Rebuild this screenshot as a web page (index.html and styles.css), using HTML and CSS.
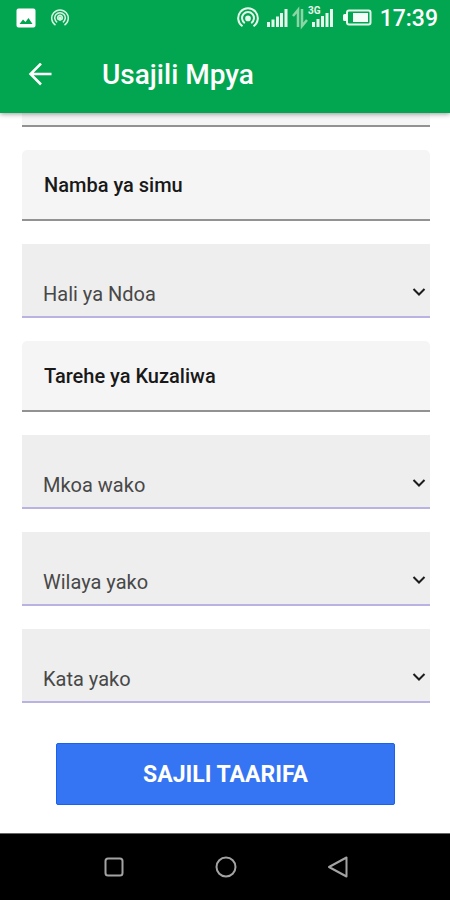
FILE: index.html
```html
<!DOCTYPE html>
<html lang="sw">
<head>
<meta charset="utf-8">
<meta name="viewport" content="width=device-width, initial-scale=1">
<title>Usajili Mpya</title>
<link rel="stylesheet" href="styles.css">
</head>
<body>
<header class="header">
  <div class="status">
    <svg class="icon" width="20" height="20" viewBox="0 0 20 20"><path fill="#fff" fill-rule="evenodd" d="M2.500 0.500h15a2 2 0 0 1 2 2v15a2 2 0 0 1-2 2h-15a2 2 0 0 1-2-2v-15a2 2 0 0 1 2-2zM3.500 16h13l-4-6-3 4-2.500-2.500z"/></svg>
    <svg class="icon" width="18" height="18" viewBox="0 0 24 24" fill="none" stroke="#d9f5e3" stroke-width="2"><path d="M6 21.500a11 11 0 1 1 12 0M8.200 17.800a7 7 0 1 1 7.600 0M10.500 14.500a3.200 3.200 0 1 1 3 0"/><circle cx="12" cy="12" r="1.500" fill="#d9f5e3"/><path d="M12 13v3"/></svg>
    <div class="status-right">
      <svg class="icon" width="22" height="22" viewBox="0 0 24 24" fill="none" stroke="#e4f8eb" stroke-width="2.200"><path d="M6 21a10.700 10.700 0 1 1 12 0M8.500 17.500a6.500 6.500 0 1 1 7 0"/><circle cx="12" cy="12.500" r="2" fill="#e4f8eb"/></svg>
      <svg class="icon" width="68" height="24" viewBox="1 2 68 24"><g fill="#e4f8eb"><path d="M1 18h3v5h-3zM5.500 15.500h3v7.500h-3zM10 12.500h3v10.500h-3zM14 9h3v14h-3zM18.500 5h3v18h-3z"/><path d="M46 18h3v5h-3zM50.500 15h3v8h-3zM55 12h3v11h-3zM59.500 9h3v14h-3zM64 5h3v18h-3z"/></g><path d="M32 23V6l-5 6M36 5v17l5-6" fill="none" stroke="#8bd5a7" stroke-width="2.500"/><text class="network" x="42" y="10">3G</text></svg>
      <svg class="icon" width="29" height="18" viewBox="0 0 29 18"><rect x="4" y="1.500" width="23.500" height="14" rx="2" fill="none" stroke="#e4f8eb" stroke-width="2"/><path d="M4 5H1.500Q0 5 0 6.500v4Q0 12 1.500 12H4zM10 4h15v9H10z" fill="#f4fdf7"/></svg>
      <time class="clock">17:39</time>
    </div>
  </div>
  <div class="appbar">
    <button class="back" type="button" aria-label="Rudi"><svg class="icon" width="24" height="24" viewBox="0 0 24 24" fill="none" stroke="#fff" stroke-width="2.500"><path d="M23.500 11H2.500M13 0.500L2.500 11L13 21.500"/></svg></button>
    <h1 class="title">Usajili Mpya</h1>
  </div>
</header>
<main class="main">
  <form class="form">
    <input class="field" type="text" aria-label="Jina">
    <input class="field" type="tel" placeholder="Namba ya simu" aria-label="Namba ya simu">
    <div class="picker">
      <select class="select" aria-label="Hali ya Ndoa"><option>Hali ya Ndoa</option></select>
      <svg class="chevron" width="14" height="10" viewBox="0 0 14 10"><path d="M1.500 2L7 7.500L12.500 2"/></svg>
    </div>
    <input class="field" type="text" placeholder="Tarehe ya Kuzaliwa" aria-label="Tarehe ya Kuzaliwa">
    <div class="picker">
      <select class="select" aria-label="Mkoa wako"><option>Mkoa wako</option></select>
      <svg class="chevron" width="14" height="10" viewBox="0 0 14 10"><path d="M1.500 2L7 7.500L12.500 2"/></svg>
    </div>
    <div class="picker">
      <select class="select" aria-label="Wilaya yako"><option>Wilaya yako</option></select>
      <svg class="chevron" width="14" height="10" viewBox="0 0 14 10"><path d="M1.500 2L7 7.500L12.500 2"/></svg>
    </div>
    <div class="picker">
      <select class="select" aria-label="Kata yako"><option>Kata yako</option></select>
      <svg class="chevron" width="14" height="10" viewBox="0 0 14 10"><path d="M1.500 2L7 7.500L12.500 2"/></svg>
    </div>
    <button class="submit" type="submit">SAJILI TAARIFA</button>
  </form>
</main>
<nav class="nav">
  <button class="nav-button" type="button" aria-label="Programu"><svg class="icon" width="22" height="22" viewBox="0 0 22 22"><rect x="2.500" y="2.500" width="17" height="17" rx="2.500"/></svg></button>
  <button class="nav-button" type="button" aria-label="Mwanzo"><svg class="icon" width="22" height="22" viewBox="0 0 22 22"><circle cx="11" cy="11" r="9.500"/></svg></button>
  <button class="nav-button" type="button" aria-label="Nyuma"><svg class="icon" width="22" height="22" viewBox="0 0 22 22"><path d="M2 11L19.500 1.500V20.500z"/></svg></button>
</nav>
</body>
</html>
```

FILE: styles.css
```css
* {
  box-sizing: border-box;
}

body {
  margin: 0;
  min-height: 100vh;
  display: flex;
  flex-direction: column;
  background: #fff;
  font-family: Roboto, "Liberation Sans", sans-serif;
}

button {
  border: 0;
  padding: 0;
  font-family: inherit;
}

.icon {
  display: block;
  flex: none;
}

.header {
  position: relative;
  z-index: 1;
  background: #03a650;
  color: #fff;
  box-shadow: 0 1px 5px rgba(0, 0, 0, 0.4);
}

.status {
  display: flex;
  align-items: center;
  gap: 15px;
  height: 36px;
  padding: 0 12px 0 16px;
}

.status-right {
  display: flex;
  align-items: center;
  gap: 8px;
  margin-left: auto;
}

.network {
  font-size: 10px;
  font-weight: 700;
  fill: #e4f8eb;
}

.clock {
  font-size: 23px;
  font-weight: 500;
}

.appbar {
  display: flex;
  align-items: center;
  gap: 50px;
  height: 77px;
  padding: 0 28px;
}

.back {
  background: none;
}

.title {
  margin: 0;
  font-size: 28px;
  line-height: 32px;
  font-weight: 500;
}

.main {
  flex: 1;
  padding: 0 20px 28px 22px;
}

/* The form is scrolled so that its first field lies under the header. */
.form {
  display: flex;
  flex-direction: column;
  gap: 23px;
  margin-top: -57px;
}

.field {
  width: 100%;
  height: 71px;
  padding: 0 22px;
  border: 0;
  border-bottom: 2px solid #929292;
  border-radius: 5px 5px 0 0;
  background: #f5f5f5;
  font-family: inherit;
  font-size: 20px;
  font-weight: 500;
}

.field::placeholder {
  color: #191919;
}

.picker {
  display: grid;
}

.select {
  grid-area: 1 / 1;
  appearance: none;
  width: 100%;
  height: 74px;
  padding: 28px 40px 0 21px;
  border: 0;
  border-bottom: 2px solid #b9b3e4;
  border-radius: 0;
  background: #eee;
  color: #484848;
  font-family: inherit;
  font-size: 20px;
}

.chevron {
  grid-area: 1 / 1;
  align-self: end;
  justify-self: end;
  margin: 0 4px 21px 0;
  fill: none;
  stroke: #1c1c1c;
  stroke-width: 2;
  pointer-events: none;
}

.submit {
  height: 62px;
  margin: 17px 35px 0 34px;
  border: 1px solid #1a62ea;
  border-radius: 2px;
  background: #3574f2;
  color: #fff;
  font-size: 23px;
  font-weight: 700;
}

.nav {
  display: flex;
  justify-content: center;
  align-items: center;
  gap: 90px;
  height: 67px;
  padding-left: 2px;
  border-top: 1px solid #666;
  background: #000;
}

.nav-button {
  background: none;
  fill: none;
  stroke: #a3a3a3;
  stroke-width: 2;
  stroke-linejoin: round;
}
```
